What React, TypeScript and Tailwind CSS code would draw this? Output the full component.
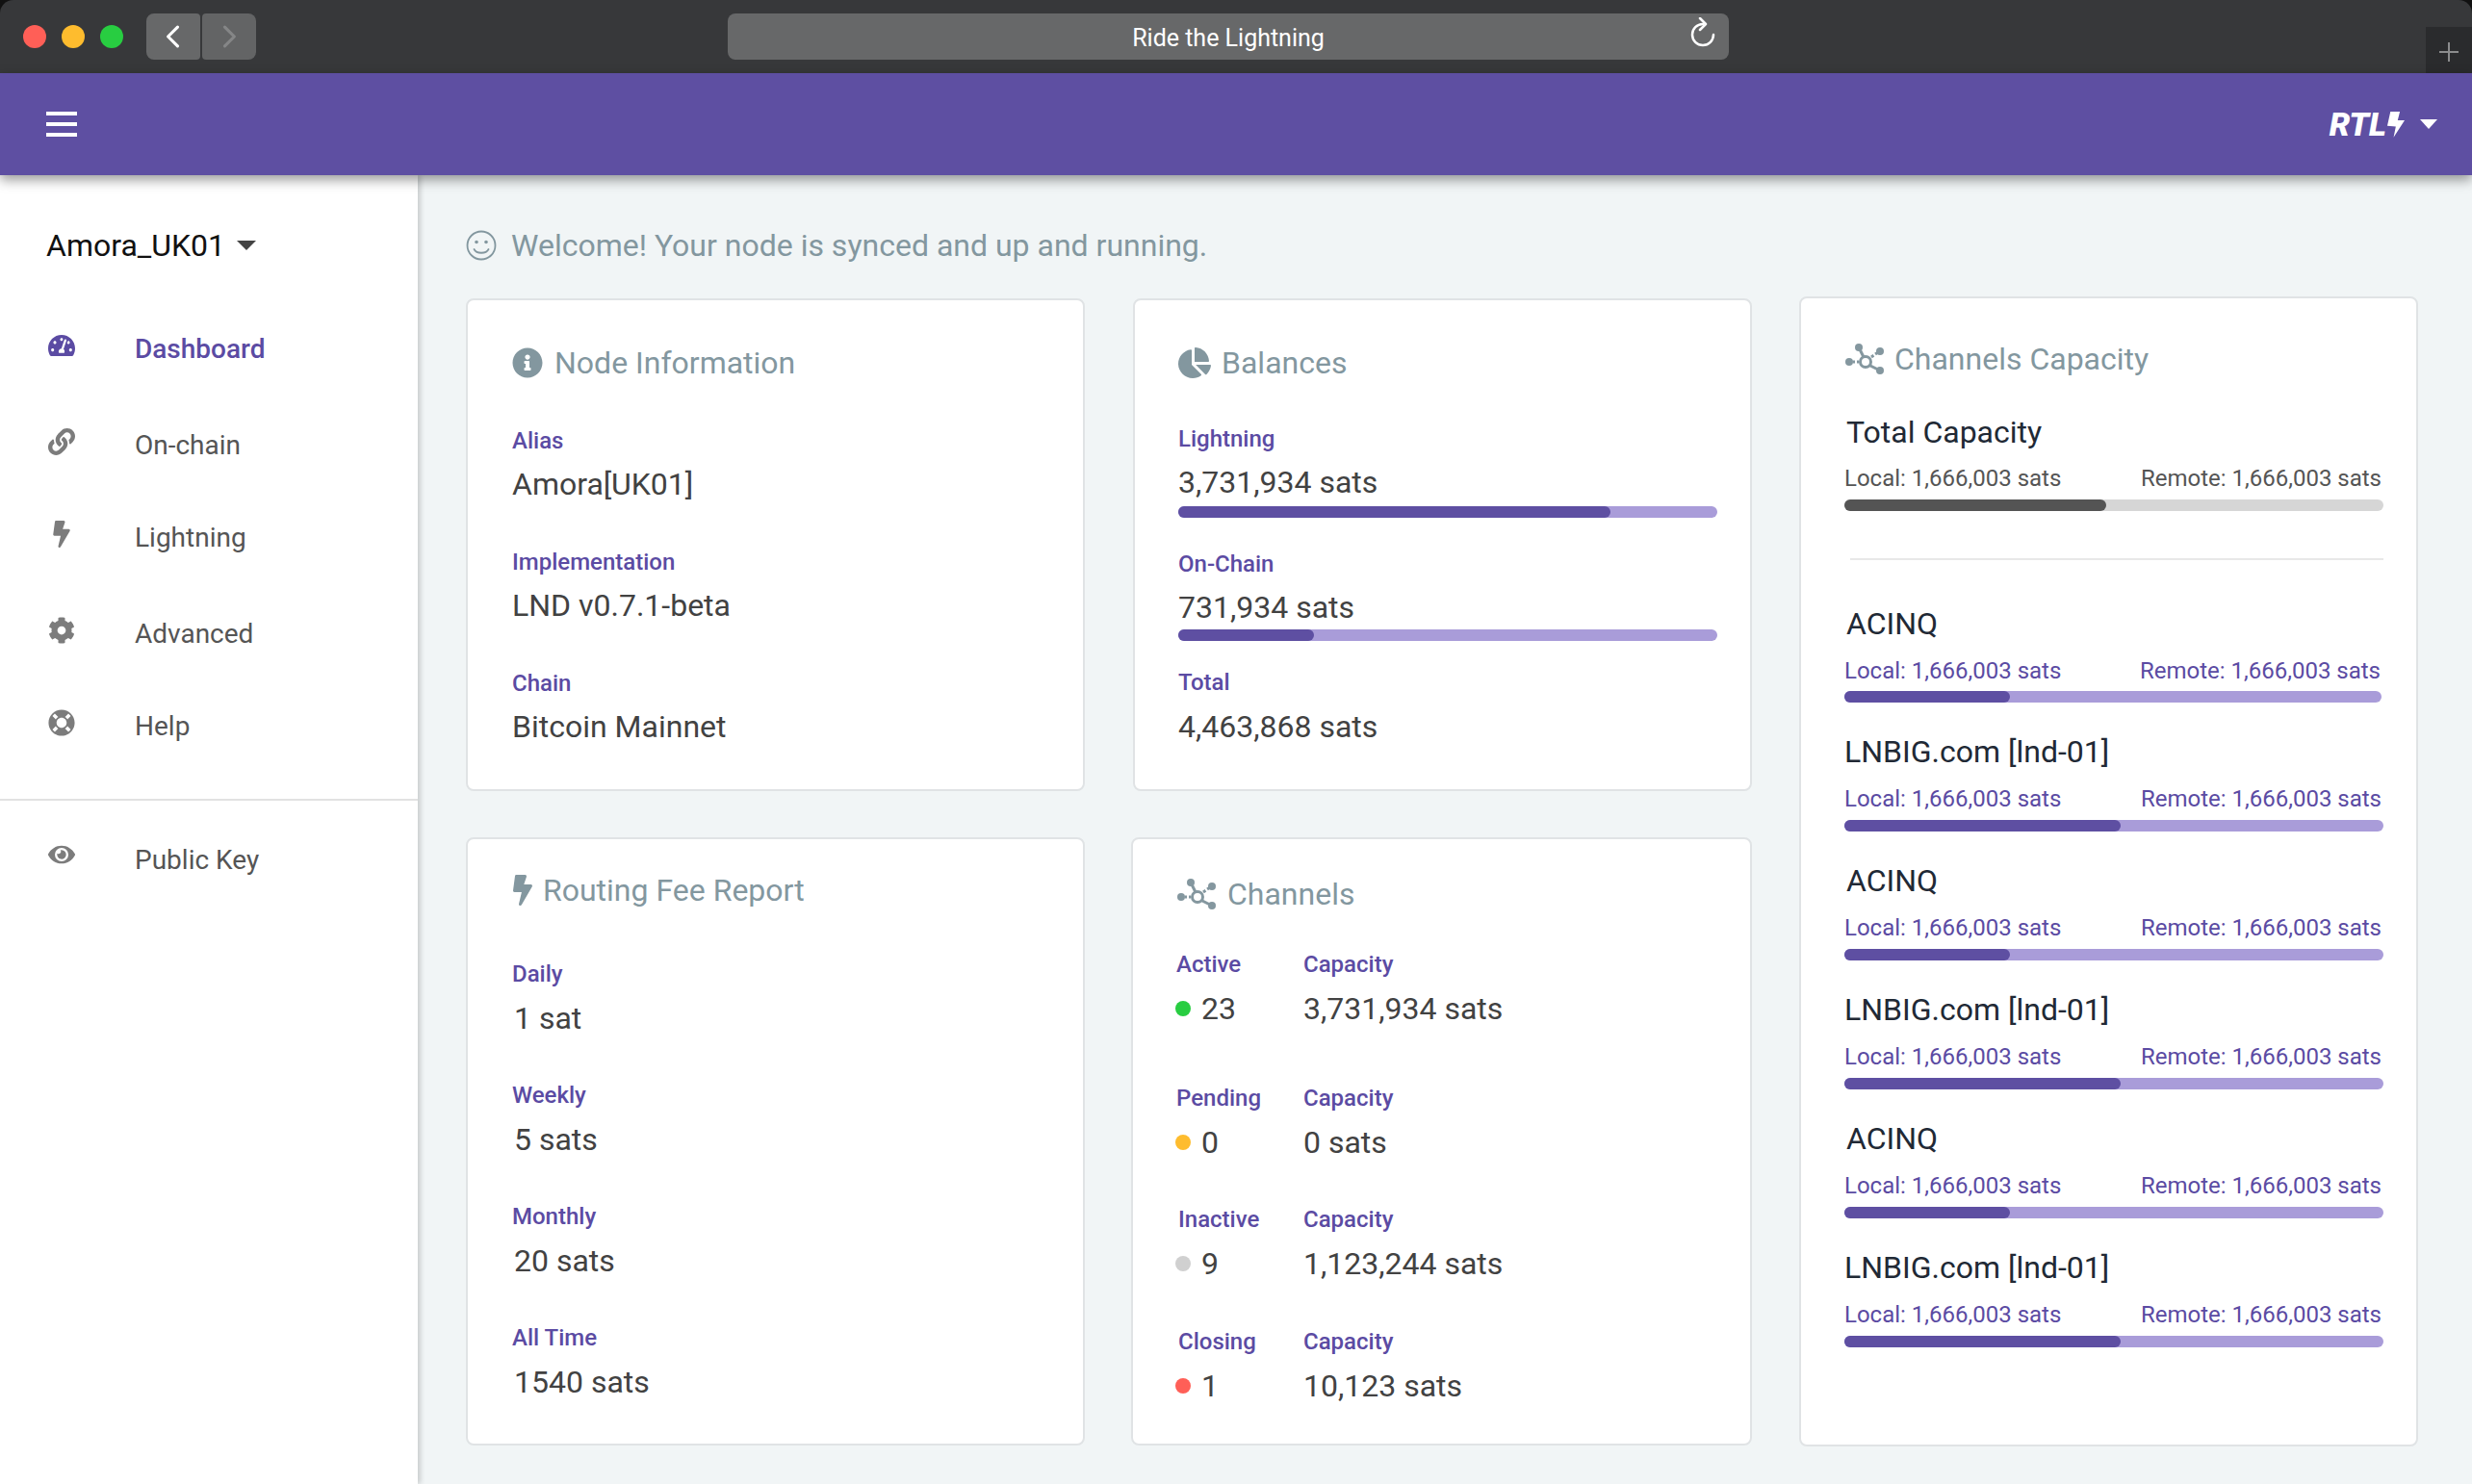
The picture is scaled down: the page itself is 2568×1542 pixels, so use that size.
import { FaBolt, FaChartPie, FaCog, FaEye, FaInfoCircle, FaLifeRing, FaLink, FaTachometerAlt } from "react-icons/fa";

function NetworkIcon({ className }: { className: string }) {
  return (
    <svg viewBox="0 0 42 32" className={className} fill="none">
      <g stroke="#84979f">
        <path d="M15 4 L20 14" strokeWidth="3" />
        <path d="M27 23 L37 28" strokeWidth="3" />
        <path d="M9 19 H15" strokeWidth="3" strokeDasharray="2 2" />
        <path d="M28 14 L35 9" strokeWidth="3" strokeDasharray="3 2" />
        <circle cx="22" cy="19" r="5.5" strokeWidth="3" />
      </g>
      <g fill="#84979f">
        <circle cx="15" cy="4" r="4" />
        <circle cx="37" cy="8" r="4" />
        <circle cx="5" cy="19" r="4" />
        <circle cx="37" cy="28" r="4" />
      </g>
    </svg>
  );
}

function Stat({ label, value, className = "", valueClass = "mt-[10px]" }: { label: string; value: string; className?: string; valueClass?: string }) {
  return (
    <div className={className}>
      <div className="h-8 text-[24px] leading-8 font-medium text-[#5b4ba3]">{label}</div>
      <div className={`h-10 text-[32px] leading-10 text-[#424242] ${valueClass}`}>{value}</div>
    </div>
  );
}

function Bar({ fill, dark = false, className = "" }: { fill: number; dark?: boolean; className?: string }) {
  return (
    <div className={`h-3 rounded-full ${dark ? "bg-[#d6d6d6]" : "bg-[#a99cd9]"} ${className}`}>
      <div className={`h-3 rounded-full ${dark ? "bg-[#545454]" : "bg-[#5e4fa2]"}`} style={{ width: `${fill}px` }} />
    </div>
  );
}

function CapacityRow({ name, fill, indent, first = false }: { name: string; fill: number; indent: string; first?: boolean }) {
  return (
    <div>
      <div className={`h-10 text-[32px] leading-10 text-[#212935] ${indent}`}>{name}</div>
      <div className={`mt-[13px] flex h-8 justify-between text-[24px] leading-8 text-[#5b4ba3] ${first ? "pr-[3px]" : "pr-[2px]"}`}>
        <span>Local: 1,666,003 sats</span>
        <span>Remote: 1,666,003 sats</span>
      </div>
      <Bar fill={fill} className={first ? "mt-[5px] w-[558px]" : "mt-[6px] w-[560px]"} />
    </div>
  );
}

function ChannelStat({ label, dot, count, capacity, className = "", labelIndent = "pl-0" }: { label: string; dot: string; count: string; capacity: string; className?: string; labelIndent?: string }) {
  return (
    <div className={`flex ${className}`}>
      <div className="w-[132px]">
        <div className={`h-8 text-[24px] leading-8 font-medium text-[#5b4ba3] ${labelIndent}`}>{label}</div>
        <div className="mt-[10px] flex h-10 items-center text-[32px] leading-10 text-[#424242]">
          <span className={`mr-[10px] h-4 w-4 -translate-x-[1px] rounded-full ${dot}`} />
          {count}
        </div>
      </div>
      <Stat label="Capacity" value={capacity} />
    </div>
  );
}

const navItems = [
  { label: "Dashboard", icon: FaTachometerAlt, top: "mt-0", active: true },
  { label: "On-chain", icon: FaLink, top: "mt-[68px]", active: false },
  { label: "Lightning", icon: FaBolt, top: "mt-[64px]", active: false },
  { label: "Advanced", icon: FaCog, top: "mt-[68px]", active: false },
  { label: "Help", icon: FaLifeRing, top: "mt-[64px]", active: false },
];

export default function App() {
  return (
    <div className="flex h-[1542px] w-[2568px] flex-col overflow-hidden bg-[#111] font-['Roboto',sans-serif]">
      {/* Browser chrome */}
      <div className="relative flex h-[76px] shrink-0 items-center rounded-t-[14px] bg-[#37383a] pl-6">
        <span className="h-6 w-6 rounded-full bg-[#ff5f57]" />
        <span className="ml-4 h-6 w-6 rounded-full bg-[#febc2e]" />
        <span className="ml-4 h-6 w-6 rounded-full bg-[#28cd41]" />
        <div className="ml-[24px] flex h-12 w-14 items-center justify-center rounded-l-lg rounded-r-sm bg-[#676869]">
          <svg viewBox="0 0 20 28" className="h-[26px] w-[18px]" fill="none" stroke="white" strokeWidth="3.5" strokeLinecap="round" strokeLinejoin="round">
            <path d="M15 3 L4 14 L15 25" />
          </svg>
        </div>
        <div className="ml-[2px] flex h-12 w-14 items-center justify-center rounded-l-sm rounded-r-lg bg-[#636465]">
          <svg viewBox="0 0 20 28" className="h-[26px] w-[18px]" fill="none" stroke="#858687" strokeWidth="3.5" strokeLinecap="round" strokeLinejoin="round">
            <path d="M5 3 L16 14 L5 25" />
          </svg>
        </div>
        <div className="relative ml-[490px] flex h-12 w-[1040px] items-center justify-center rounded-lg bg-[#676869] text-[25px] text-white">
          <span className="translate-y-[2px]">Ride the Lightning</span>
          <svg viewBox="0 0 28 32" className="absolute right-[13px] top-[4px] h-[32px] w-[28px]" fill="none" stroke="white" strokeWidth="2.5" strokeLinecap="round" strokeLinejoin="round">
            <path d="M14 7 A11 11 0 1 0 25 18" />
            <path d="M11 1 L17 7 L11 13" />
          </svg>
        </div>
        <div className="absolute bottom-0 right-0 flex h-12 w-12 items-center justify-center bg-[#2a2b2d]">
          <svg viewBox="0 0 20 20" className="mt-[4px] h-5 w-5" stroke="#8b8c8d" strokeWidth="2">
            <path d="M10 0 V20 M0 10 H20" />
          </svg>
        </div>
      </div>

      {/* App header */}
      <div className="relative z-20 flex h-[106px] shrink-0 items-center justify-between bg-[#5e4fa2] pl-12 pr-[36px] shadow-[0_5px_12px_rgba(0,0,0,0.4)]">
        <svg viewBox="0 0 32 28" className="h-[28px] w-8" fill="white">
          <rect y="1" width="32" height="4" />
          <rect y="12" width="32" height="4" />
          <rect y="23" width="32" height="4" />
        </svg>
        <div className="flex items-center">
          <span className="text-[34px] font-black italic text-white">RTL</span>
          <svg viewBox="0 0 55 84" className="ml-[1px] h-[28px] w-[18px]" fill="white">
            <path d="M10 2 H40 L33 30 H55 L20 84 L27 50 L0 47 Z" />
          </svg>
          <span className="ml-[16px] h-0 w-0 border-x-[9px] border-t-[10px] border-x-transparent border-t-white" />
        </div>
      </div>

      <div className="flex min-h-0 flex-1">
        {/* Sidebar */}
        <div className="relative z-10 w-[434px] shrink-0 bg-white shadow-[3px_0_5px_rgba(0,0,0,0.16)]">
          <div className="mt-[53px] flex h-10 items-center pl-12 text-[32px] text-[#111]">
            Amora_UK01
            <span className="ml-[12px] h-0 w-0 border-x-[10px] border-t-[10px] border-x-transparent border-t-[#444]" />
          </div>
          <nav className="mt-[72px] flex flex-col">
            {navItems.map((item) => (
              <div key={item.label} className={`flex h-8 items-center pl-12 ${item.top}`}>
                <div className="flex w-[92px] -translate-y-1 items-center">
                  <div className="flex w-8 justify-center">
                    <item.icon className={`h-[28px] w-auto ${item.active ? "text-[#5b4ba3]" : "text-[#7c7c7c]"}`} />
                  </div>
                </div>
                <span className={`text-[28px] ${item.active ? "font-medium text-[#5b4ba3]" : "text-[#555]"}`}>{item.label}</span>
              </div>
            ))}
          </nav>
          <div className="mt-[59px] h-[2px] bg-[#e2e2e2]" />
          <div className="mt-[46px] flex h-8 items-center pl-12">
            <div className="flex w-[92px] -translate-y-[6px] items-center">
              <div className="flex w-8 justify-center">
                <FaEye className="h-[28px] w-auto text-[#7c7c7c]" />
              </div>
            </div>
            <span className="text-[28px] text-[#555]">Public Key</span>
          </div>
        </div>

        {/* Content */}
        <div className="min-w-0 flex-1 bg-[#f1f5f6] pl-[50px]">
          <div className="mt-[53px] flex h-10 items-center text-[32px] text-[#83979f]">
            <svg viewBox="0 0 32 32" className="mr-[15px] h-[32px] w-[32px]" fill="none" stroke="#83979f" strokeWidth="1.8" strokeLinecap="round">
              <circle cx="16" cy="16" r="14.5" />
              <path d="M8.5 20 C11 25 21 25 23.5 20" />
              <circle cx="11" cy="12.5" r="1.8" fill="#83979f" stroke="none" />
              <circle cx="21" cy="12.5" r="1.8" fill="#83979f" stroke="none" />
            </svg>
            Welcome! Your node is synced and up and running.
          </div>

          <div className="flex">
            <div className="w-[643px]">
              <div className="mt-[35px] h-[512px] rounded-lg border-2 border-[#e0e3e5] bg-white pl-[46px] pt-[45px]">
                <div className="flex h-10 items-center text-[32px] text-[#83979f]">
                  <FaInfoCircle className="mr-[12px] h-[32px] w-[32px]" />
                  Node Information
                </div>
                <div className="mt-[45px] flex flex-col gap-[45px]">
                  <Stat label="Alias" value="Amora[UK01]" valueClass="mt-[9px]" />
                  <Stat label="Implementation" value="LND v0.7.1-beta" valueClass="mt-[9px]" />
                  <Stat label="Chain" value="Bitcoin Mainnet" valueClass="mt-[9px]" />
                </div>
              </div>
              <div className="mt-[48px] h-[632px] rounded-lg border-2 border-[#e0e3e5] bg-white pl-[46px] pt-[33px]">
                <div className="flex h-10 items-center text-[32px] text-[#83979f]">
                  <FaBolt className="mr-[10px] h-[32px] w-[22px]" />
                  Routing Fee Report
                </div>
                <div className="mt-[51px] flex flex-col gap-[44px]">
                  <Stat label="Daily" value="1 sat" valueClass="mt-[10px] pl-[2px]" />
                  <Stat label="Weekly" value="5 sats" valueClass="mt-[10px] pl-[2px]" />
                  <Stat label="Monthly" value="20 sats" valueClass="mt-[10px] pl-[2px]" />
                  <Stat label="All Time" value="1540 sats" valueClass="mt-[10px] pl-[2px]" />
                </div>
              </div>
            </div>

            <div className="ml-[50px] w-[643px]">
              <div className="mt-[35px] h-[512px] rounded-lg border-2 border-[#e0e3e5] bg-white pl-[45px] pt-[45px]">
                <div className="flex h-10 items-center text-[32px] text-[#83979f]">
                  <FaChartPie className="mr-[11px] h-[32px] w-[34px]" />
                  Balances
                </div>
                <Stat label="Lightning" value="3,731,934 sats" className="mt-[43px]" valueClass="mt-[9px]" />
                <Bar fill={449} className="mt-[5px] w-[560px]" />
                <Stat label="On-Chain" value="731,934 sats" className="mt-8" valueClass="mt-[9px]" />
                <Bar fill={141} className="mt-[3px] w-[560px]" />
                <Stat label="Total" value="4,463,868 sats" className="mt-[27px]" />
              </div>
              <div className="-ml-[2px] mt-[48px] h-[632px] rounded-lg border-2 border-[#e0e3e5] bg-white pl-[45px] pt-[37px]">
                <div className="flex h-10 items-center text-[32px] text-[#83979f]">
                  <NetworkIcon className="mr-[11px] h-[32px] w-[42px]" />
                  Channels
                </div>
                <div className="mt-[37px] flex flex-col">
                  <ChannelStat label="Active" dot="bg-[#28cd41]" count="23" capacity="3,731,934 sats" />
                  <ChannelStat label="Pending" dot="bg-[#febc2e]" count="0" capacity="0 sats" className="mt-[57px]" />
                  <ChannelStat label="Inactive" dot="bg-[#d0d0d0]" count="9" capacity="1,123,244 sats" labelIndent="pl-[2px]" className="mt-[44px]" />
                  <ChannelStat label="Closing" dot="bg-[#ff5f57]" count="1" capacity="10,123 sats" labelIndent="pl-[2px]" className="mt-[45px]" />
                </div>
              </div>
            </div>

            <div className="ml-[49px] mt-[33px] h-[1195px] w-[643px] rounded-lg border-2 border-[#e0e3e5] bg-white pl-[45px] pt-[43px]">
              <div className="flex h-10 items-center text-[32px] text-[#83979f]">
                <NetworkIcon className="mr-[10px] h-[32px] w-[42px]" />
                Channels Capacity
              </div>
              <div className="mt-[36px] h-10 pl-[2px] text-[32px] leading-10 text-[#212935]">Total Capacity</div>
              <div className="mt-3 flex h-8 w-[558px] justify-between text-[24px] leading-8 text-[#555]">
                <span>Local: 1,666,003 sats</span>
                <span>Remote: 1,666,003 sats</span>
              </div>
              <Bar dark fill={272} className="mt-[6px] w-[560px]" />
              <div className="ml-[6px] mt-[49px] h-[2px] w-[554px] bg-[#e8e8e8]" />
              <div className="mt-[46px] flex w-[560px] flex-col gap-[31px]">
                <CapacityRow first name="ACINQ" fill={172} indent="pl-[2px]" />
                <CapacityRow name="LNBIG.com [lnd-01]" fill={287} indent="pl-0" />
                <CapacityRow name="ACINQ" fill={172} indent="pl-[2px]" />
                <CapacityRow name="LNBIG.com [lnd-01]" fill={287} indent="pl-0" />
                <CapacityRow name="ACINQ" fill={172} indent="pl-[2px]" />
                <CapacityRow name="LNBIG.com [lnd-01]" fill={287} indent="pl-0" />
              </div>
            </div>
          </div>
        </div>
      </div>
    </div>
  );
}
